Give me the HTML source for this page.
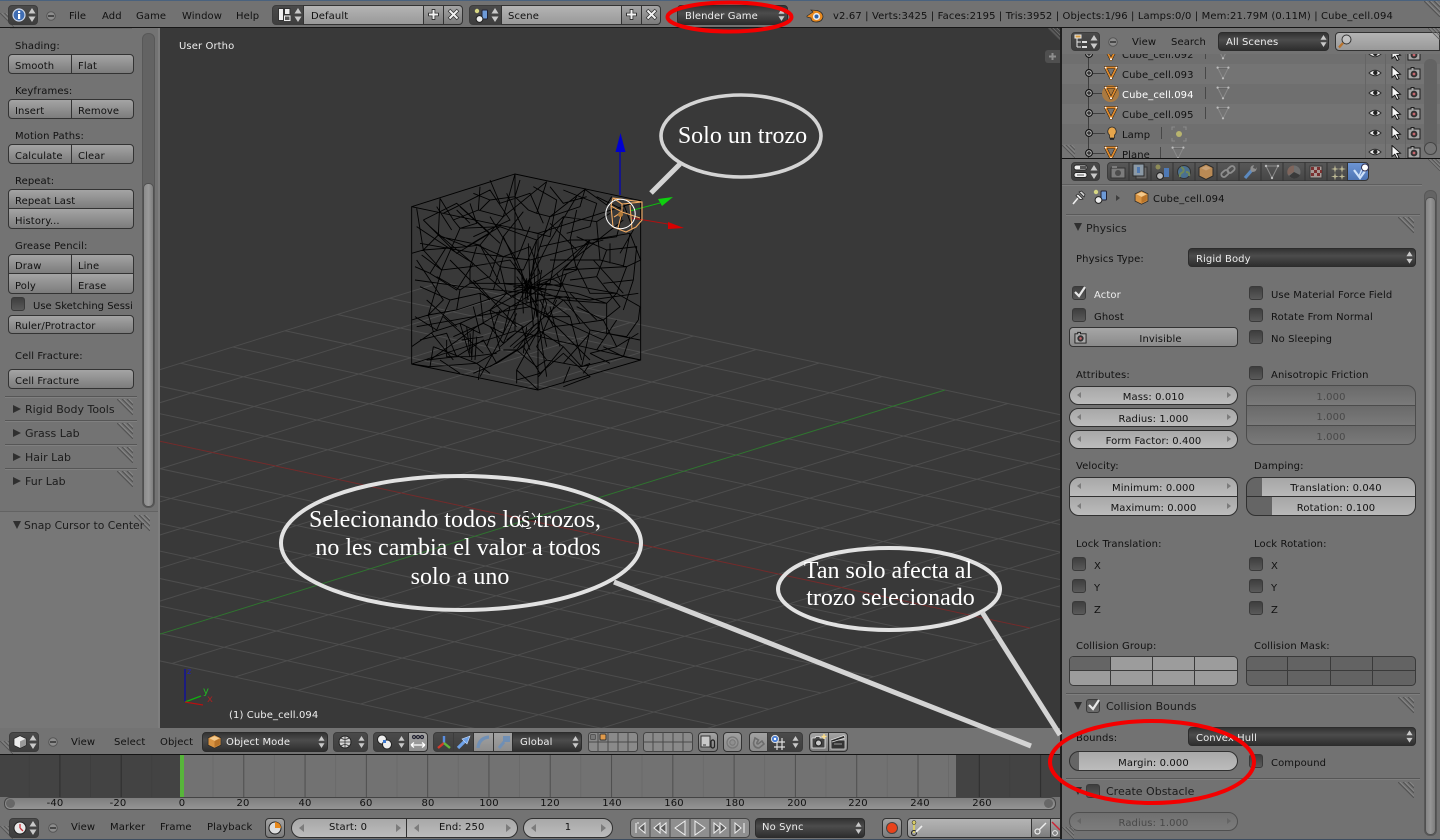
<!DOCTYPE html>
<html lang="en"><head><meta charset="utf-8"><title>Blender</title>
<style>
html,body{margin:0;padding:0;background:#727272;overflow:hidden}
#r{position:relative;width:1440px;height:840px;overflow:hidden;background:#727272;font:10px/14px "DejaVu Sans","Liberation Sans",sans-serif;color:#111}
#r div,#r span,#r svg.i{position:absolute}
.t{white-space:nowrap;height:14px;margin-top:2px;letter-spacing:.1px}
.w{color:#eee}
.g{color:#484848}
.h{font-size:11px;color:#1c1c1c;margin-top:1px;letter-spacing:0}
.cn{text-align:center}
.b{box-sizing:border-box;border:1px solid #333;background:linear-gradient(#a4a4a4,#7c7c7c)}
.f{box-sizing:border-box;border:1px solid #333;background:linear-gradient(#b4b4b4,#999)}
.d{box-sizing:border-box;border:1px solid #2c2c2c;border-radius:4px;background:linear-gradient(#333,#4c4c4c 40%,#2e2e2e)}
.k{box-sizing:border-box;border:1px solid #3c3c3c;background:linear-gradient(#4a4a4a,#3e3e3e)}
.n{box-sizing:border-box;border:1px solid #303030;background:linear-gradient(#a8a8a8,#bcbcbc)}
.c{box-sizing:border-box;width:14px;height:14px;border:1px solid #3a3a3a;border-radius:3px;background:linear-gradient(#3e3e3e,#5a5a5a)}
.s{background:#565656;height:1px;box-shadow:0 1px 0 #808080}
.i{overflow:visible}
</style></head><body><div id="r">

<svg width="0" height="0" style="position:absolute"><defs>
<symbol id="ud" viewBox="0 0 8 14"><path d="M4 0L7.5 5.5H.5zM4 14L.5 8.5h7z" fill="#c9c9c9"/></symbol>
<symbol id="mn" viewBox="0 0 12 12"><circle cx="6" cy="6" r="4.3" fill="#8d8d8d" stroke="#565656"/><rect x="3" y="5.2" width="6" height="1.6" fill="#363636"/></symbol>
<symbol id="ha" viewBox="0 0 16 16"><path d="M0 0L16 16M5 0L16 11M10 0L16 6" stroke="#525252" fill="none"/><path d="M1 -1L17 15M6 -1L17 10M11 -1L17 5" stroke="#8c8c8c" fill="none" stroke-width=".7"/></symbol>
<symbol id="eye" viewBox="0 0 14 14"><path d="M1 7Q7 1.5 13 7Q7 12.5 1 7z" fill="#ececec" stroke="#2a2a2a"/><circle cx="7.3" cy="6.8" r="2.2" fill="#222"/></symbol>
<symbol id="cur" viewBox="0 0 14 14"><path d="M3 .5V11.5L5.8 9.2L8 13.5L10 12.5L7.8 8.4L11.5 8.2Z" fill="#f6f6f6" stroke="#111" stroke-width=".9"/></symbol>
<symbol id="cam" viewBox="0 0 14 14"><path d="M1 3H4V1.5H7V3H13V13H1Z" fill="#a8a8a8" stroke="#1e1e1e"/><circle cx="7" cy="8" r="3.4" fill="#333"/><circle cx="7" cy="8" r="1.4" fill="#c7656c"/></symbol>
<symbol id="tri" viewBox="0 0 14 14"><path d="M1.5 1.5H12.5L7 12.5Z" fill="none" stroke="#1f1a14" stroke-width="2.8"/><path d="M1.5 1.5H12.5L7 12.5Z" fill="none" stroke="#e08a2c" stroke-width="1.8"/><circle cx="7" cy="12.3" r="1" fill="#fff"/><circle cx="1.6" cy="1.6" r=".9" fill="#fff"/><circle cx="12.4" cy="1.6" r=".9" fill="#fff"/></symbol>
<symbol id="gt" viewBox="0 0 14 14"><path d="M1.5 1.5H12.5L7 12.5Z" fill="none" stroke="#8a8a8a" stroke-width="1"/><path d="M2.7 2.7H11.2" stroke="#5a5a5a" stroke-width=".5"/><circle cx="7" cy="12.3" r="1.1" fill="#bdbdbd"/><circle cx="1.6" cy="1.6" r="1.1" fill="#bdbdbd"/><circle cx="12.4" cy="1.6" r="1.1" fill="#bdbdbd"/></symbol>
<symbol id="cube" viewBox="0 0 14 14"><path d="M7 .7L13 3.6V10.4L7 13.3L1 10.4V3.6Z" fill="#d99442" stroke="#2b2b2b" stroke-width=".7"/><path d="M7 2L11.7 4L7 6.4L2.3 4Z" fill="#f3c98d"/><path d="M7 6.6V12.3L12 9.8V4.2Z" fill="#b97429"/></symbol>
<symbol id="ex" viewBox="0 0 10 10"><circle cx="5" cy="5" r="3.4" fill="#a9a9a9" stroke="#111" stroke-width="1.1"/><path d="M3 5H7M5 3V7" stroke="#111" stroke-width="1"/></symbol>
<symbol id="sc" viewBox="0 0 16 16"><rect x="8" y="2" width="5.5" height="9" rx="1" fill="#6d9ad8" stroke="#223"/><circle cx="5.5" cy="11" r="3.4" fill="#ededed" stroke="#222"/><circle cx="3" cy="3" r="2.2" fill="#d7d783"/></symbol>
</defs></svg>

<!-- top strip + bar -->
<div style="left:0;top:0;width:1440px;height:1px;background:#4a627e"></div>
<div style="left:0;top:27px;width:1440px;height:1px;background:#161616"></div>
<svg class="i" style="left:0;top:13px" width="14" height="14"><use href="#ha"/></svg>
<svg class="i" style="left:1424px;top:1px" width="16" height="16"><use href="#ha"/></svg>

<div class="k" style="left:8px;top:5px;width:30px;height:20px;border-radius:4px"></div>
<svg class="i" style="left:12px;top:8px" width="14" height="14"><circle cx="7" cy="7" r="6" fill="#3f6db4" stroke="#cfd9ea" stroke-width="1.2"/><rect x="6" y="6" width="2.2" height="5" fill="#fff"/><rect x="6" y="3" width="2.2" height="2" fill="#fff"/></svg>
<svg class="i" style="left:28px;top:8px" width="8" height="14"><use href="#ud"/></svg>
<svg class="i" style="left:45px;top:10px" width="12" height="12"><use href="#mn"/></svg>
<span class="t" style="left:69px;top:8px">File</span>
<span class="t" style="left:102px;top:8px">Add</span>
<span class="t" style="left:136px;top:8px">Game</span>
<span class="t" style="left:182px;top:8px">Window</span>
<span class="t" style="left:236px;top:8px">Help</span>

<div class="k" style="left:272px;top:5px;width:32px;height:20px;border-radius:4px 0 0 4px"></div>
<svg class="i" style="left:278px;top:8px" width="13" height="13"><rect x=".5" y=".5" width="5" height="12" fill="#eee" stroke="#333"/><rect x="6.5" y=".5" width="5.5" height="6" fill="#eee" stroke="#333"/><rect x="6.5" y="8" width="5.5" height="4.5" fill="#555" stroke="#eee"/></svg>
<svg class="i" style="left:294px;top:8px" width="8" height="14"><use href="#ud"/></svg>
<div class="f" style="left:303px;top:5px;width:121px;height:20px"></div>
<span class="t" style="left:311px;top:8px">Default</span>
<div class="b" style="left:423px;top:5px;width:21px;height:20px"></div>
<div class="b" style="left:443px;top:5px;width:20px;height:20px;border-radius:0 4px 4px 0"></div>
<svg class="i" style="left:428px;top:9px" width="11" height="11"><path d="M5.5 0V11M0 5.5H11" stroke="#333" stroke-width="3.6"/><path d="M5.5 1V10M1 5.5H10" stroke="#f2f2f2" stroke-width="2"/></svg>
<svg class="i" style="left:448px;top:9px" width="11" height="11"><path d="M1 1L10 10M10 1L1 10" stroke="#333" stroke-width="3.6"/><path d="M1.5 1.5L9.5 9.5M9.5 1.5L1.5 9.5" stroke="#f2f2f2" stroke-width="2"/></svg>

<div class="k" style="left:469px;top:5px;width:33px;height:20px;border-radius:4px 0 0 4px"></div>
<svg class="i" style="left:474px;top:8px" width="16" height="16"><use href="#sc"/></svg>
<svg class="i" style="left:491px;top:8px" width="8" height="14"><use href="#ud"/></svg>
<div class="f" style="left:501px;top:5px;width:121px;height:20px"></div>
<span class="t" style="left:508px;top:8px">Scene</span>
<div class="b" style="left:621px;top:5px;width:21px;height:20px"></div>
<div class="b" style="left:641px;top:5px;width:20px;height:20px;border-radius:0 4px 4px 0"></div>
<svg class="i" style="left:626px;top:9px" width="11" height="11"><path d="M5.5 0V11M0 5.5H11" stroke="#333" stroke-width="3.6"/><path d="M5.5 1V10M1 5.5H10" stroke="#f2f2f2" stroke-width="2"/></svg>
<svg class="i" style="left:646px;top:9px" width="11" height="11"><path d="M1 1L10 10M10 1L1 10" stroke="#333" stroke-width="3.6"/><path d="M1.5 1.5L9.5 9.5M9.5 1.5L1.5 9.5" stroke="#f2f2f2" stroke-width="2"/></svg>

<div class="d" style="left:677px;top:5px;width:111px;height:20px"></div>
<span class="t w" style="left:685px;top:8px">Blender Game</span>
<svg class="i" style="left:778px;top:9px" width="7" height="12"><use href="#ud"/></svg>
<svg class="i" style="left:806px;top:8px" width="18" height="15" viewBox="0 0 18 15"><path d="M1 8L7 4L5 2L11 2.5Q17 4 17 9Q16 14 10 14Q5 14 5 10L1 9Z" fill="#e98a1f" stroke="#2a2a2a" stroke-width=".7"/><circle cx="10.5" cy="8.5" r="3.6" fill="#eee"/><circle cx="10.5" cy="8.5" r="2" fill="#2d62a8"/></svg>
<span class="t" style="left:833px;top:8px;width:560px;letter-spacing:.13px">v2.67 | Verts:3425 | Faces:2195 | Tris:3952 | Objects:1/96 | Lamps:0/0 | Mem:21.79M (0.11M) | Cube_cell.094</span>

<!-- Viewport -->
<div style="left:160px;top:28px;width:900px;height:700px;background:#393939"></div>
<svg class="i" style="left:160px;top:28px;overflow:hidden" width="900" height="700" viewBox="160 28 900 700">
<g transform="matrix(62.9 13.5 52.25 -16.25 527 520)" fill="none" stroke="#4d4d4d"><path vector-effect="non-scaling-stroke" d="M-8 -8H8M-8 -7H8M-8 -6H8M-8 -5H8M-8 -4H8M-8 -3H8M-8 -2H8M-8 -1H8M-8 1H8M-8 2H8M-8 3H8M-8 4H8M-8 5H8M-8 6H8M-8 7H8M-8 8H8M-8 -8V8M-7 -8V8M-6 -8V8M-5 -8V8M-4 -8V8M-3 -8V8M-2 -8V8M-1 -8V8M1 -8V8M2 -8V8M3 -8V8M4 -8V8M5 -8V8M6 -8V8M7 -8V8M8 -8V8"/></g>
<path d="M24 412L1030 628" stroke="#742b2b" fill="none"/>
<path d="M109 650L945 390" stroke="#2f752f" fill="none"/>
<g transform="translate(390 160) scale(.33333)" fill="none" stroke="#000" stroke-width="2.7">
<path d="M65 140L375 42L752 122V600L444 690L65 612ZM65 140V612M65 612L444 690"/>
<path d="M150 115L145 225L230 260L270 255L340 170L375 42M270 80L265 150L340 170L470 65M470 65L440 160L480 170L585 88L570 140L480 170M585 88L650 135L665 110M150 115L190 180L265 150M80 145L100 270L145 225M65 280L100 270L155 330L95 285M100 270L230 260L330 200L440 240L520 170L620 185L660 160M190 180L210 205L330 200M210 205L155 330L240 320L260 260M240 320L240 370L330 370L420 380M330 370L270 255M340 230L410 380L470 200L480 170M415 250L420 380L440 240M520 170L480 370L420 380M520 330L600 240L720 220L752 300M620 185L630 300L710 320L752 300M480 300L630 300M520 330L710 320L680 400L750 440M650 430L680 400L510 370M650 430L650 520L750 540M745 480L750 440M745 480L710 530L650 520M520 420L650 430M520 420L600 510L650 520M600 510L575 620M420 380L430 500L380 570L340 570M430 500L520 420L420 380M470 370L445 510L520 560L575 620L600 610M445 510L380 630L445 690M520 560L445 650M350 400L300 450L330 570L260 610L130 560M350 400L200 450L115 465L65 480M155 330L115 465L130 515L65 560M130 515L210 490L300 450M210 490L240 590L320 580M240 520L245 590M260 530L255 600M130 560L120 620M170 540L170 590L240 590M300 450L400 500L330 560M300 450L420 380M420 380L360 300L240 320M420 380L530 300L600 240M420 380L540 470L575 600M420 380L560 400L650 430M415 360L410 430M425 365L420 440M405 370L415 420M410 355L405 425M440 370L470 430L460 470M470 370L510 380L520 330M440 370Q490 340 515 380M340 370L520 375M350 540L430 480M360 560L440 490M370 565L445 500M385 570L450 510M300 620L380 570L440 620L470 600L575 620L700 590L752 600M700 590L720 530M125 520L190 600M65 612L120 620L260 610L300 640M580 640L600 610M270 620L265 660M380 630L380 670M150 230L270 255L330 320L400 330M480 80L520 130L590 110M250 100L300 120L270 150M300 120L375 110L390 60M375 110L415 150L440 160M400 155L340 230M340 230L300 350L240 370M600 240L560 320L520 330M560 320L600 400L680 400M140 350L210 390L240 370M210 390L200 450M80 300L160 420L115 465M330 320L350 400L470 370M400 330L440 240M460 470L540 470M500 420L440 560L470 600M380 460L340 550L300 500M240 130L260 190L210 205M560 150L540 240L600 240M660 250L660 310M700 320L720 220M250 440L270 520L210 490M150 600L210 640M540 620L520 670M640 560L700 590"/>
<path d="M65 140L444 220L752 122M444 220V690M375 42V513M65 612L375 513L752 600M100 180L200 130L300 220L200 280L100 180M160 160L300 90L360 180L250 230M300 60L330 130L420 100L460 190M430 80L500 120L480 230L400 210M520 90L620 130L600 200L530 220M620 110L700 150L680 230L610 240M700 130L730 210L690 280M80 200L170 260L120 340L75 320M170 260L250 310L200 390L120 340M250 250L340 290L310 390M340 290L420 260L450 340L370 390M450 260L540 240L560 330L480 360M560 230L650 270L620 350L540 360M650 270L740 260L730 360L640 370M620 350L690 440L640 480L560 440M730 360L700 450M90 380L180 420L140 510L75 470M180 420L270 400L280 490L190 530M270 400L360 440L340 520L280 490M360 440L450 420L490 500L400 540M450 420L530 410L570 490L490 500M570 490L640 480L680 560L600 580M680 560L745 520M90 540L170 520L200 590L110 600M200 590L280 540L320 610L250 640M320 610L400 560L450 640L380 660M450 640L520 580L600 650L520 680M600 580L660 610M395 330L400 460M430 300L440 470M455 330L430 480M380 350L445 440M370 380L470 390M360 410L480 360M395 500L420 570M410 500L400 580M450 470L470 560M230 500L240 580M250 510L245 600M215 540L280 530M140 140L185 210M200 150L240 190M500 340L540 420M530 340L490 430"/>
<path d="M120 200L260 320L350 400L470 470L600 600M300 170L380 300L440 450L470 650M560 110L470 260L400 400L320 560L270 650M700 180L560 290L430 400L260 500L120 600M75 360L220 380L420 400L600 420L745 400M90 250L260 280L420 300L640 240M80 500L250 470L420 440L640 540M180 300L300 420M250 360L380 500M160 470L280 580M480 190L560 270M540 400L620 480M610 300L700 400M350 100L400 210M210 140L330 250M600 520L520 610M680 480L620 570M110 420L200 500M330 450L290 560M480 440L510 560M420 200L380 300"/>
</g>
<path d="M620 195V150" stroke="#0000c0" stroke-width="1.2"/>
<path d="M620.5 133L625.5 152H615.5Z" fill="#0000d0"/>
<path d="M630 211L660 203" stroke="#10b810" stroke-width="1"/>
<path d="M658 199L673 197L662 206Z" fill="#0fd00f"/>
<path d="M632 218L668 224" stroke="#b01010" stroke-width="1"/>
<path d="M668 222L684 228L668 229Z" fill="#d80000"/>
<g fill="none" stroke="#f0aa62" stroke-width="1.1"><path d="M613 198L642 202V220L636 227L626 232L613 227L611 206Z"/><path d="M613 198L622 204L642 202M611 206L622 212L622 204M622 212L618 228M622 212L640 218M614 217L622 212M630 205L632 229"/></g>
<circle cx="620.5" cy="214" r="14.7" fill="none" stroke="#fff" stroke-width="1"/>
<circle cx="620.5" cy="214.3" r="2.6" fill="#b07a3a"/>
<path d="M185 669V702" stroke="#0000c8" stroke-width="1"/>
<path d="M185 702L201 696" stroke="#10b010" stroke-width="1.3"/>
<path d="M185 702L203 705" stroke="#b81010" stroke-width="1.3"/>
<path d="M527 510V530M517 520H537" stroke="#111" stroke-width="1"/>
<circle cx="527" cy="520" r="8.5" fill="none" stroke="#fff" stroke-dasharray="5 4" stroke-width="1"/>
</svg>
<span class="t w" style="left:179px;top:38px">User Ortho</span>
<span class="t" style="left:187px;top:663px;color:#1e1ec8;font-size:8px">z</span>
<span class="t" style="left:203px;top:683px;color:#22b922">y</span>
<span class="t" style="left:207px;top:691px;color:#a52222">x</span>
<span class="t w" style="left:229px;top:707px">(1) Cube_cell.094</span>
<div style="left:1045px;top:50px;width:15px;height:13px;background:#4f4f4f;border-radius:3px 0 0 3px"></div>
<svg class="i" style="left:1049px;top:53px" width="7" height="7"><path d="M3.5 0V7M0 3.5H7" stroke="#8e8e8e" stroke-width="2"/></svg>
<svg class="i" style="left:1048px;top:28px" width="12" height="12"><use href="#ha"/></svg>

<!-- Tool shelf -->
<div style="left:0;top:28px;width:160px;height:700px;background:#737373"></div>
<div style="left:158px;top:28px;width:2px;height:700px;background:#7e7e7e"></div>
<div style="left:0;top:512px;width:158px;height:216px;background:#777"></div>
<div style="left:0;top:511px;width:158px;height:1px;background:#636363"></div>
<div style="left:10px;top:28px;width:122px;height:1px;background:#666"></div>
<div style="left:142px;top:33px;width:13px;height:475px;background:#636363;border-radius:6px;box-sizing:border-box;border:1px solid #585858"></div>
<div style="left:143px;top:183px;width:11px;height:324px;background:linear-gradient(90deg,#8a8a8a,#9a9a9a,#7e7e7e);border-radius:5px;box-sizing:border-box;border:1px solid #505050"></div>

<span class="t" style="left:15px;top:38px">Shading:</span>
<div class="b" style="left:8px;top:54px;width:64px;height:20px;border-radius:4px 0 0 4px"></div><div class="b" style="left:71px;top:54px;width:63px;height:20px;border-radius:0 4px 4px 0"></div>
<span class="t" style="left:15px;top:58px">Smooth</span><span class="t" style="left:78px;top:58px">Flat</span>
<span class="t" style="left:15px;top:83px">Keyframes:</span>
<div class="b" style="left:8px;top:99px;width:64px;height:20px;border-radius:4px 0 0 4px"></div><div class="b" style="left:71px;top:99px;width:63px;height:20px;border-radius:0 4px 4px 0"></div>
<span class="t" style="left:15px;top:103px">Insert</span><span class="t" style="left:78px;top:103px">Remove</span>
<span class="t" style="left:15px;top:128px">Motion Paths:</span>
<div class="b" style="left:8px;top:144px;width:64px;height:20px;border-radius:4px 0 0 4px"></div><div class="b" style="left:71px;top:144px;width:63px;height:20px;border-radius:0 4px 4px 0"></div>
<span class="t" style="left:15px;top:148px">Calculate</span><span class="t" style="left:78px;top:148px">Clear</span>
<span class="t" style="left:15px;top:173px">Repeat:</span>
<div class="b" style="left:8px;top:189px;width:126px;height:20px;border-radius:4px 4px 0 0"></div><div class="b" style="left:8px;top:208px;width:126px;height:21px;border-radius:0 0 4px 4px"></div>
<span class="t" style="left:15px;top:193px">Repeat Last</span><span class="t" style="left:15px;top:213px">History...</span>
<span class="t" style="left:15px;top:238px">Grease Pencil:</span>
<div class="b" style="left:8px;top:254px;width:64px;height:20px;border-radius:4px 0 0 0"></div><div class="b" style="left:71px;top:254px;width:63px;height:20px;border-radius:0 4px 0 0"></div>
<div class="b" style="left:8px;top:273px;width:64px;height:21px;border-radius:0 0 0 4px"></div><div class="b" style="left:71px;top:273px;width:63px;height:21px;border-radius:0 0 4px 0"></div>
<span class="t" style="left:15px;top:258px">Draw</span><span class="t" style="left:78px;top:258px">Line</span>
<span class="t" style="left:15px;top:278px">Poly</span><span class="t" style="left:78px;top:278px">Erase</span>
<div class="c" style="left:11px;top:297px"></div>
<span class="t" style="left:33px;top:298px;letter-spacing:0">Use Sketching Sessi</span>
<div class="b" style="left:8px;top:315px;width:126px;height:19px;border-radius:4px"></div>
<span class="t" style="left:15px;top:318px">Ruler/Protractor</span>
<span class="t" style="left:15px;top:348px">Cell Fracture:</span>
<div class="b" style="left:8px;top:369px;width:126px;height:20px;border-radius:4px"></div>
<span class="t" style="left:15px;top:373px">Cell Fracture</span>

<div class="s" style="left:5px;top:396px;width:132px"></div>
<div class="s" style="left:5px;top:420px;width:132px"></div>
<div class="s" style="left:5px;top:444px;width:132px"></div>
<div class="s" style="left:5px;top:468px;width:132px"></div>
<svg class="i" style="left:12px;top:404px" width="10" height="10"><path d="M1 1L9 5L1 9Z" fill="#2f2f2f"/></svg><span class="t h" style="left:25px;top:402px">Rigid Body Tools</span><svg class="i" style="left:117px;top:399px" width="16" height="16"><use href="#ha"/></svg>
<svg class="i" style="left:12px;top:428px" width="10" height="10"><path d="M1 1L9 5L1 9Z" fill="#2f2f2f"/></svg><span class="t h" style="left:25px;top:426px">Grass Lab</span><svg class="i" style="left:117px;top:423px" width="16" height="16"><use href="#ha"/></svg>
<svg class="i" style="left:12px;top:452px" width="10" height="10"><path d="M1 1L9 5L1 9Z" fill="#2f2f2f"/></svg><span class="t h" style="left:25px;top:450px">Hair Lab</span><svg class="i" style="left:117px;top:447px" width="16" height="16"><use href="#ha"/></svg>
<svg class="i" style="left:12px;top:476px" width="10" height="10"><path d="M1 1L9 5L1 9Z" fill="#2f2f2f"/></svg><span class="t h" style="left:25px;top:474px">Fur Lab</span><svg class="i" style="left:117px;top:471px" width="16" height="16"><use href="#ha"/></svg>
<svg class="i" style="left:12px;top:520px" width="10" height="10"><path d="M1 1H9L5 9Z" fill="#2f2f2f"/></svg><span class="t h" style="left:24px;top:518px;font-size:10.8px">Snap Cursor to Center</span><svg class="i" style="left:134px;top:515px" width="16" height="16"><use href="#ha"/></svg>

<!-- 3D view header -->
<div style="left:0;top:728px;width:1061px;height:27px;background:#737373"></div>
<div style="left:0;top:754px;width:1061px;height:1px;background:#141414"></div>
<svg class="i" style="left:0;top:741px" width="13" height="13"><use href="#ha"/></svg>
<div class="k" style="left:9px;top:732px;width:30px;height:20px;border-radius:4px"></div>
<svg class="i" style="left:13px;top:735px" width="14" height="14"><path d="M7 .7L13 3.6V10.4L7 13.3L1 10.4V3.6Z" fill="#ececec" stroke="#222" stroke-width=".7"/><path d="M7 6.4V13L13 10V3.6Z" fill="#999"/></svg>
<svg class="i" style="left:29px;top:735px" width="8" height="14"><use href="#ud"/></svg>
<svg class="i" style="left:47px;top:736px" width="12" height="12"><use href="#mn"/></svg>
<span class="t" style="left:71px;top:734px">View</span>
<span class="t" style="left:114px;top:734px">Select</span>
<span class="t" style="left:160px;top:734px">Object</span>
<div class="d" style="left:202px;top:732px;width:126px;height:20px"></div>
<svg class="i" style="left:207px;top:734px" width="15" height="15"><use href="#cube"/></svg>
<span class="t w" style="left:226px;top:734px">Object Mode</span>
<svg class="i" style="left:318px;top:736px" width="7" height="12"><use href="#ud"/></svg>
<div class="k" style="left:333px;top:732px;width:35px;height:20px;border-radius:4px"></div>
<svg class="i" style="left:338px;top:735px" width="14" height="14"><circle cx="7" cy="7" r="6" fill="#d5d5d5" stroke="#222"/><path d="M1 7H13M7 1V13M3 3Q7 6 11 3M3 11Q7 8 11 11" stroke="#333" fill="none" stroke-width=".8"/></svg>
<svg class="i" style="left:358px;top:736px" width="7" height="12"><use href="#ud"/></svg>
<div class="k" style="left:373px;top:732px;width:36px;height:20px;border-radius:4px 0 0 4px"></div>
<svg class="i" style="left:376px;top:734px" width="18" height="16"><circle cx="6" cy="5.5" r="4.5" fill="#eee" stroke="#222"/><circle cx="11" cy="10.5" r="4.5" fill="#eee" stroke="#222"/><rect x="7" y="6" width="3" height="3" fill="#3b78d0"/></svg>
<svg class="i" style="left:398px;top:736px" width="7" height="12"><use href="#ud"/></svg>
<div class="b" style="left:408px;top:732px;width:20px;height:20px;border-radius:0 4px 4px 0;background:linear-gradient(#a6a6a6,#8e8e8e)"></div>
<svg class="i" style="left:410px;top:734px" width="16" height="16"><circle cx="4" cy="3" r="1.6" fill="#777" stroke="#223"/><circle cx="8" cy="3" r="1.6" fill="#777" stroke="#223"/><circle cx="12" cy="3" r="1.6" fill="#777" stroke="#223"/><path d="M1 11H15M1 11L4 8.5M1 11L4 13.5M15 11L12 8.5M15 11L12 13.5" stroke="#fff" fill="none" stroke-width="1.3"/></svg>
<div class="k" style="left:433px;top:732px;width:21px;height:20px;border-radius:4px 0 0 4px"></div>
<div class="k" style="left:453px;top:732px;width:21px;height:20px"></div>
<div class="b" style="left:473px;top:732px;width:21px;height:20px;background:linear-gradient(#a2a2a2,#8d8d8d)"></div>
<div class="b" style="left:493px;top:732px;width:20px;height:20px;background:linear-gradient(#a2a2a2,#8d8d8d)"></div>
<div class="d" style="left:512px;top:732px;width:70px;height:20px;border-radius:0 4px 4px 0"></div>
<svg class="i" style="left:436px;top:734px" width="16" height="16"><path d="M8 2V9" stroke="#5a8ee0" stroke-width="2.4"/><path d="M8 9L2 14" stroke="#d53a2a" stroke-width="2.4"/><path d="M8 9L14 14" stroke="#63b73b" stroke-width="2.4"/></svg>
<svg class="i" style="left:456px;top:734px" width="16" height="16"><path d="M2 14L9 7" stroke="#6fa2e8" stroke-width="3.2"/><path d="M14 2L6 5L11 10Z" fill="#6fa2e8" stroke="#cfe0f7" stroke-width=".6"/></svg>
<svg class="i" style="left:476px;top:734px" width="16" height="16"><path d="M2 14Q3 4 13 3" stroke="#6f8fb5" stroke-width="3.2" fill="none"/></svg>
<svg class="i" style="left:496px;top:734px" width="16" height="16"><path d="M3 14L8 8" stroke="#6f8fb5" stroke-width="3"/><rect x="7" y="2" width="7" height="6" fill="#6f8fb5"/></svg>
<span class="t w" style="left:520px;top:734px">Global</span>
<svg class="i" style="left:572px;top:736px" width="7" height="12"><use href="#ud"/></svg>
<svg class="i" style="left:588px;top:732px" width="50" height="20"><rect x=".5" y=".5" width="49" height="19" rx="3" fill="#8a8a8a" stroke="#444"/><path d="M10 .5V19.5M20 .5V19.5M30 .5V19.5M40 .5V19.5M.5 10H49.5" stroke="#4a4a4a"/><rect x="2.5" y="2.5" width="5" height="5" rx="1" fill="#777" stroke="#555"/><rect x="12" y="2" width="6" height="6" rx="1" fill="#e09a4a" stroke="#333"/></svg>
<svg class="i" style="left:643px;top:732px" width="50" height="20"><rect x=".5" y=".5" width="49" height="19" rx="3" fill="#8a8a8a" stroke="#444"/><path d="M10 .5V19.5M20 .5V19.5M30 .5V19.5M40 .5V19.5M.5 10H49.5" stroke="#4a4a4a"/></svg>
<div class="b" style="left:698px;top:732px;width:20px;height:20px;border-radius:4px"></div>
<svg class="i" style="left:700px;top:734px" width="16" height="16"><rect x="1" y="2" width="9" height="11" fill="#c9c9c9" stroke="#333"/><path d="M3 11H6" stroke="#333"/><rect x="11" y="6" width="3.5" height="8" rx="1.7" fill="none" stroke="#222" stroke-width="1.2"/></svg>
<div class="b" style="left:723px;top:732px;width:19px;height:20px;border-radius:4px;background:linear-gradient(#a0a0a0,#8a8a8a)"></div>
<svg class="i" style="left:725px;top:735px" width="15" height="15"><circle cx="7.5" cy="7.5" r="5.5" fill="none" stroke="#777" stroke-width="1.3"/><circle cx="7.5" cy="7.5" r="2.7" fill="#8f8f8f" stroke="#777"/></svg>
<div class="b" style="left:749px;top:732px;width:19px;height:20px;border-radius:4px 0 0 4px;background:linear-gradient(#a2a2a2,#8c8c8c)"></div>
<svg class="i" style="left:751px;top:735px" width="15" height="15"><path d="M4 3L2.5 8Q3 13 8 13L13 9L11 6L7 9Q5.5 9 6 7.5L7.5 5Z" fill="none" stroke="#6d6d6d" stroke-width="1.6"/></svg>
<div class="k" style="left:767px;top:732px;width:36px;height:20px;border-radius:0 4px 4px 0"></div>
<svg class="i" style="left:770px;top:734px" width="16" height="16"><path d="M4 8H15M4 13H15M7 4V16M12 4V16" stroke="#ddd" stroke-width="1.2"/><circle cx="5" cy="5" r="3.6" fill="#4a7fd6" stroke="#ddd"/><circle cx="5" cy="5" r="1.2" fill="#fff"/></svg>
<svg class="i" style="left:792px;top:736px" width="7" height="12"><use href="#ud"/></svg>
<div class="b" style="left:809px;top:732px;width:20px;height:20px;border-radius:4px 0 0 4px"></div>
<div class="b" style="left:828px;top:732px;width:20px;height:20px;border-radius:0 4px 4px 0"></div>
<svg class="i" style="left:811px;top:734px" width="16" height="16"><path d="M1 4H4L5 2.5H9V4H14V14H1Z" fill="#444" stroke="#eee" stroke-width=".8"/><circle cx="7.5" cy="9" r="3" fill="#c8c8c8" stroke="#222"/><path d="M13 0V5M10.5 2.5H15.5" stroke="#ffe08a" stroke-width="1.4"/></svg>
<svg class="i" style="left:830px;top:734px" width="16" height="16"><rect x="1" y="6" width="14" height="9" fill="#333" stroke="#ddd" stroke-width=".7"/><path d="M1 6L14 1.5L15 4L2 8" fill="#2b2b2b" stroke="#ddd" stroke-width=".7"/><path d="M4 10H12" stroke="#999"/></svg>

<!-- Timeline -->
<div style="left:0;top:755px;width:1061px;height:42px;background:#727272"></div>
<div style="left:0;top:755px;width:181px;height:42px;background:#434343"></div>
<div style="left:956px;top:755px;width:105px;height:42px;background:#434343"></div>
<div style="left:0;top:755px;width:1061px;height:42px;background-image:linear-gradient(90deg,rgba(0,0,0,.26) 1px,transparent 1px),linear-gradient(90deg,rgba(0,0,0,.07) 1px,transparent 1px);background-size:61.3px 100%,30.65px 100%;background-position:59.4px 0,28.75px 0"></div>
<div style="left:180px;top:755px;width:4px;height:42px;background:#57b53a"></div>
<div style="left:0;top:797px;width:1061px;height:15px;background:#737373"></div>
<div style="left:4px;top:797px;width:1052px;height:13px;box-sizing:border-box;border:1px solid #444;border-radius:6px;background:linear-gradient(#7e7e7e,#949494)"></div>
<div style="left:6px;top:799px;width:9px;height:9px;background:#676767;border-radius:50%"></div>
<div style="left:1044px;top:799px;width:9px;height:9px;background:#676767;border-radius:50%"></div>
<span class="t cn" style="left:35px;top:795px;width:40px">-40</span>
<span class="t cn" style="left:98px;top:795px;width:40px">-20</span>
<span class="t cn" style="left:162px;top:795px;width:40px">0</span>
<span class="t cn" style="left:223px;top:795px;width:40px">20</span>
<span class="t cn" style="left:285px;top:795px;width:40px">40</span>
<span class="t cn" style="left:346px;top:795px;width:40px">60</span>
<span class="t cn" style="left:408px;top:795px;width:40px">80</span>
<span class="t cn" style="left:469px;top:795px;width:40px">100</span>
<span class="t cn" style="left:530px;top:795px;width:40px">120</span>
<span class="t cn" style="left:592px;top:795px;width:40px">140</span>
<span class="t cn" style="left:654px;top:795px;width:40px">160</span>
<span class="t cn" style="left:715px;top:795px;width:40px">180</span>
<span class="t cn" style="left:777px;top:795px;width:40px">200</span>
<span class="t cn" style="left:838px;top:795px;width:40px">220</span>
<span class="t cn" style="left:900px;top:795px;width:40px">240</span>
<span class="t cn" style="left:962px;top:795px;width:40px">260</span>

<!-- Timeline header -->
<div style="left:0;top:812px;width:1061px;height:28px;background:#737373"></div>
<svg class="i" style="left:0;top:826px" width="13" height="13"><use href="#ha"/></svg>
<div class="k" style="left:9px;top:818px;width:30px;height:20px;border-radius:4px"></div>
<svg class="i" style="left:13px;top:821px" width="14" height="14"><circle cx="7" cy="7" r="6" fill="#e8e8e8" stroke="#222"/><path d="M7 7V3M7 7L10 10" stroke="#c8343a" stroke-width="1.3"/></svg>
<svg class="i" style="left:29px;top:821px" width="8" height="14"><use href="#ud"/></svg>
<svg class="i" style="left:47px;top:822px" width="12" height="12"><use href="#mn"/></svg>
<span class="t" style="left:71px;top:819px">View</span>
<span class="t" style="left:110px;top:819px">Marker</span>
<span class="t" style="left:160px;top:819px">Frame</span>
<span class="t" style="left:207px;top:819px">Playback</span>
<div class="b" style="left:265px;top:818px;width:20px;height:20px;border-radius:4px"></div>
<svg class="i" style="left:268px;top:821px" width="14" height="14"><circle cx="7" cy="7" r="6" fill="#ddd" stroke="#222"/><path d="M7 7V1A6 6 0 0 1 13 7Z" fill="#e8881a"/></svg>
<div class="n" style="left:291px;top:818px;width:116px;height:20px;border-radius:10px 0 0 10px"></div>
<div class="n" style="left:406px;top:818px;width:112px;height:20px;border-radius:0 10px 10px 0"></div>
<div class="n" style="left:523px;top:818px;width:90px;height:20px;border-radius:10px"></div>
<svg class="i" style="left:298px;top:823px" width="8" height="10"><path d="M6 1L1 5L6 9Z" fill="#7c7c7c"/></svg>
<svg class="i" style="left:395px;top:823px" width="8" height="10"><path d="M1 1L6 5L1 9Z" fill="#7c7c7c"/></svg>
<svg class="i" style="left:413px;top:823px" width="8" height="10"><path d="M6 1L1 5L6 9Z" fill="#7c7c7c"/></svg>
<svg class="i" style="left:505px;top:823px" width="8" height="10"><path d="M1 1L6 5L1 9Z" fill="#7c7c7c"/></svg>
<svg class="i" style="left:530px;top:823px" width="8" height="10"><path d="M6 1L1 5L6 9Z" fill="#7c7c7c"/></svg>
<svg class="i" style="left:600px;top:823px" width="8" height="10"><path d="M1 1L6 5L1 9Z" fill="#7c7c7c"/></svg>
<span class="t" style="left:329px;top:819px">Start: 0</span>
<span class="t" style="left:439px;top:819px">End: 250</span>
<span class="t cn" style="left:523px;top:819px;width:90px">1</span>
<svg class="i" style="left:630px;top:818px" width="120" height="20" viewBox="0 0 120 20"><rect x=".5" y=".5" width="119" height="19" rx="4" fill="#8f8f8f" stroke="#444"/><path d="M20 .5V19.5M40 .5V19.5M60 .5V19.5M80 .5V19.5M100 .5V19.5" stroke="#4a4a4a"/><g fill="#5a5a5a" stroke="#f0f0f0" stroke-width="1"><path d="M6 5V15M15 5L9 10L15 15ZM9 5L7 5"/><path d="M30 5L24 10L30 15ZM36 5L30 10L36 15Z"/><path d="M55 3L45 10L55 17Z" fill="#808080"/><path d="M65 3L75 10L65 17Z" fill="#808080"/><path d="M84 5L90 10L84 15ZM90 5L96 10L90 15Z"/><path d="M114 5V15M105 5L111 10L105 15Z"/></g></svg>
<div class="d" style="left:755px;top:818px;width:110px;height:20px"></div>
<span class="t w" style="left:762px;top:819px">No Sync</span>
<svg class="i" style="left:855px;top:822px" width="7" height="12"><use href="#ud"/></svg>
<div class="b" style="left:882px;top:818px;width:20px;height:20px;border-radius:4px"></div>
<div style="left:887px;top:823px;width:10px;height:10px;border-radius:50%;background:#e8421a;box-shadow:0 0 0 1px #444"></div>
<div class="f" style="left:907px;top:818px;width:125px;height:20px;border-radius:4px 0 0 4px"></div>
<svg class="i" style="left:909px;top:820px" width="18" height="17"><path d="M5 2V13" stroke="#d7cc6a" stroke-width="2"/><circle cx="5" cy="2.5" r="2" fill="#d7cc6a" stroke="#222" stroke-width=".5"/><circle cx="5" cy="13" r="2.5" fill="none" stroke="#222"/><path d="M7 12L13 6" stroke="#eee" stroke-width="1.6"/></svg>
<div class="b" style="left:1031px;top:818px;width:20px;height:20px"></div>
<svg class="i" style="left:1034px;top:821px" width="14" height="14"><circle cx="3.5" cy="10.5" r="2.5" fill="none" stroke="#eee" stroke-width="1.2"/><path d="M5.5 8.5L12 2" stroke="#eee" stroke-width="1.4"/></svg>
<div class="b" style="left:1050px;top:818px;width:11px;height:20px"></div>
<svg class="i" style="left:1051px;top:820px" width="10" height="16"><path d="M1 2L9 10" stroke="#c23" stroke-width="1.4"/><circle cx="4" cy="13" r="2.4" fill="none" stroke="#eee"/></svg>

<!-- Vertical divider -->
<div style="left:1060px;top:28px;width:2px;height:812px;background:#1f1f1f"></div>

<!-- Outliner header -->
<div style="left:1062px;top:28px;width:378px;height:26px;background:#737373"></div>
<div class="k" style="left:1071px;top:32px;width:29px;height:19px;border-radius:4px"></div>
<svg class="i" style="left:1074px;top:34px" width="15" height="15"><path d="M1 1H7V4H1ZM3 4V13M3 8H7M3 13H7" stroke="#e8e8e8" fill="none" stroke-width="1"/><path d="M8 8H13M8 13H13" stroke="#ddd" stroke-width="2"/><rect x="1.5" y="1.5" width="5" height="2" fill="#d79c3f"/></svg>
<svg class="i" style="left:1090px;top:35px" width="8" height="14"><use href="#ud"/></svg>
<svg class="i" style="left:1107px;top:36px" width="12" height="12"><use href="#mn"/></svg>
<span class="t" style="left:1132px;top:34px">View</span>
<span class="t" style="left:1171px;top:34px">Search</span>
<div class="d" style="left:1218px;top:32px;width:111px;height:19px"></div>
<span class="t w" style="left:1226px;top:34px">All Scenes</span>
<svg class="i" style="left:1320px;top:35px" width="7" height="12"><use href="#ud"/></svg>
<div class="f" style="left:1335px;top:32px;width:105px;height:19px;border-radius:4px 0 0 4px"></div>
<svg class="i" style="left:1337px;top:33px" width="16" height="16"><circle cx="9.5" cy="6.5" r="4.5" fill="#ddd" fill-opacity=".45" stroke="#333"/><path d="M6 10L2 14.5" stroke="#b8732e" stroke-width="2.4"/></svg>
<svg class="i" style="left:1428px;top:28px" width="12" height="12"><use href="#ha"/></svg>

<!-- Outliner list -->
<div style="left:0;top:0;width:1440px;height:840px;clip-path:inset(54px 0 682px 1062px)">
<div style="left:1062px;top:44px;width:378px;height:20px;background:#6f6f6f"></div>
<div style="left:1062px;top:64px;width:378px;height:20px;background:#747474"></div>
<div style="left:1062px;top:84px;width:378px;height:20px;background:#6f6f6f"></div>
<div style="left:1062px;top:104px;width:378px;height:20px;background:#747474"></div>
<div style="left:1062px;top:124px;width:378px;height:20px;background:#6f6f6f"></div>
<div style="left:1062px;top:144px;width:378px;height:20px;background:#747474"></div>
<div style="left:1088px;top:54px;width:1px;height:105px;background:#3f3f3f"></div>
<div style="left:1365px;top:54px;width:1px;height:105px;background:#656565"></div>
<div style="left:1385px;top:54px;width:1px;height:105px;background:#656565"></div>
<div style="left:1405px;top:54px;width:1px;height:105px;background:#656565"></div>
<div style="left:1093px;top:73px;width:12px;height:1px;background:#3f3f3f"></div>
<div style="left:1093px;top:93px;width:12px;height:1px;background:#3f3f3f"></div>
<div style="left:1093px;top:113px;width:12px;height:1px;background:#3f3f3f"></div>
<div style="left:1093px;top:133px;width:12px;height:1px;background:#3f3f3f"></div>
<div style="left:1093px;top:153px;width:12px;height:1px;background:#3f3f3f"></div>
<svg class="i" style="left:1084px;top:49px" width="10" height="10"><use href="#ex"/></svg>
<svg class="i" style="left:1084px;top:68px" width="10" height="10"><use href="#ex"/></svg>
<svg class="i" style="left:1084px;top:88px" width="10" height="10"><use href="#ex"/></svg>
<svg class="i" style="left:1084px;top:108px" width="10" height="10"><use href="#ex"/></svg>
<svg class="i" style="left:1084px;top:128px" width="10" height="10"><use href="#ex"/></svg>
<svg class="i" style="left:1084px;top:148px" width="10" height="10"><use href="#ex"/></svg>
<div style="left:1102px;top:85px;width:17px;height:17px;border-radius:50%;background:#ab7a40"></div>
<svg class="i" style="left:1104px;top:47px" width="14" height="14"><use href="#tri"/></svg>
<svg class="i" style="left:1104px;top:66px" width="14" height="14"><use href="#tri"/></svg>
<svg class="i" style="left:1104px;top:86px" width="14" height="14"><use href="#tri"/></svg>
<svg class="i" style="left:1104px;top:106px" width="14" height="14"><use href="#tri"/></svg>
<svg class="i" style="left:1104px;top:146px" width="14" height="14"><use href="#tri"/></svg>
<svg class="i" style="left:1105px;top:126px" width="14" height="15"><path d="M7 1A4.5 4.5 0 0 1 9.5 9V12H4.5V9A4.5 4.5 0 0 1 7 1Z" fill="#e7a64c" stroke="#2a2a2a" stroke-width=".8"/><path d="M5 13H9" stroke="#222" stroke-width="1.6"/></svg>
<span class="t" style="left:1122px;top:47px">Cube_cell.092</span>
<span class="t" style="left:1122px;top:67px">Cube_cell.093</span>
<span class="t" style="left:1122px;top:87px;color:#fff">Cube_cell.094</span>
<span class="t" style="left:1122px;top:107px">Cube_cell.095</span>
<span class="t" style="left:1122px;top:127px">Lamp</span>
<span class="t" style="left:1122px;top:147px">Plane</span>
<div style="left:1205px;top:67px;width:1px;height:12px;background:#474747"></div>
<div style="left:1205px;top:47px;width:1px;height:12px;background:#474747"></div>
<div style="left:1205px;top:87px;width:1px;height:12px;background:#474747"></div>
<div style="left:1205px;top:107px;width:1px;height:12px;background:#474747"></div>
<div style="left:1161px;top:127px;width:1px;height:12px;background:#474747"></div>
<div style="left:1160px;top:147px;width:1px;height:12px;background:#474747"></div>
<svg class="i" style="left:1216px;top:46px" width="14" height="14"><use href="#gt"/></svg>
<svg class="i" style="left:1216px;top:66px" width="14" height="14"><use href="#gt"/></svg>
<svg class="i" style="left:1216px;top:86px" width="14" height="14"><use href="#gt"/></svg>
<svg class="i" style="left:1216px;top:106px" width="14" height="14"><use href="#gt"/></svg>
<svg class="i" style="left:1171px;top:146px" width="14" height="14"><use href="#gt"/></svg>
<svg class="i" style="left:1171px;top:126px" width="16" height="16"><path d="M1 4V1H4M12 1H15V4M15 12V15H12M4 15H1V12" fill="none" stroke="#8a8a8a" stroke-width="1.1"/><circle cx="8" cy="8" r="3" fill="#b8b46e"/></svg>
<svg class="i" style="left:1368px;top:47px" width="14" height="14"><use href="#eye"/></svg><svg class="i" style="left:1389px;top:47px" width="14" height="14"><use href="#cur"/></svg><svg class="i" style="left:1407px;top:47px" width="14" height="14"><use href="#cam"/></svg>
<svg class="i" style="left:1368px;top:66px" width="14" height="14"><use href="#eye"/></svg><svg class="i" style="left:1389px;top:66px" width="14" height="14"><use href="#cur"/></svg><svg class="i" style="left:1407px;top:66px" width="14" height="14"><use href="#cam"/></svg>
<svg class="i" style="left:1368px;top:86px" width="14" height="14"><use href="#eye"/></svg><svg class="i" style="left:1389px;top:86px" width="14" height="14"><use href="#cur"/></svg><svg class="i" style="left:1407px;top:86px" width="14" height="14"><use href="#cam"/></svg>
<svg class="i" style="left:1368px;top:106px" width="14" height="14"><use href="#eye"/></svg><svg class="i" style="left:1389px;top:106px" width="14" height="14"><use href="#cur"/></svg><svg class="i" style="left:1407px;top:106px" width="14" height="14"><use href="#cam"/></svg>
<svg class="i" style="left:1368px;top:126px" width="14" height="14"><use href="#eye"/></svg><svg class="i" style="left:1389px;top:126px" width="14" height="14"><use href="#cur"/></svg><svg class="i" style="left:1407px;top:126px" width="14" height="14"><use href="#cam"/></svg>
<svg class="i" style="left:1368px;top:145px" width="14" height="14"><use href="#eye"/></svg><svg class="i" style="left:1389px;top:145px" width="14" height="14"><use href="#cur"/></svg><svg class="i" style="left:1407px;top:145px" width="14" height="14"><use href="#cam"/></svg>
<div style="left:1424px;top:59px;width:13px;height:96px;background:#636363;border-radius:6px"></div>
<div style="left:1424px;top:142px;width:13px;height:13px;background:#747474;border-radius:50%;box-sizing:border-box;border:1px solid #444"></div>
<svg class="i" style="left:1062px;top:145px" width="13" height="13"><use href="#ha"/></svg>
</div>
<div style="left:1062px;top:158px;width:378px;height:1px;background:#111"></div>

<!-- Properties -->
<div style="left:1062px;top:159px;width:378px;height:681px;background:#727272"></div>
<svg class="i" style="left:1428px;top:159px" width="12" height="12"><use href="#ha"/></svg>
<div class="k" style="left:1071px;top:162px;width:29px;height:19px;border-radius:4px"></div>
<svg class="i" style="left:1073px;top:164px" width="16" height="15"><rect x="1" y="1" width="13" height="5" rx="2.5" fill="#eee" stroke="#222"/><rect x="7" y="2" width="6" height="3" fill="#555"/><rect x="1" y="8.5" width="13" height="5" rx="2.5" fill="#eee" stroke="#222"/><path d="M4 11H11" stroke="#555"/></svg>
<svg class="i" style="left:1090px;top:165px" width="8" height="14"><use href="#ud"/></svg>
<!-- Tabs -->
<div class="k" style="left:1107px;top:162px;width:241px;height:19px;border-radius:4px 0 0 4px;background:linear-gradient(#575757,#474747)"></div>
<div style="left:1347px;top:162px;width:22px;height:19px;box-sizing:border-box;border:1px solid #333;border-radius:0 4px 4px 0;background:linear-gradient(#6d95d4,#4e75b4)"></div>
<svg class="i" style="left:1107px;top:162px" width="262" height="19" viewBox="0 0 262 19">
<path d="M22 0V19M44 0V19M66 0V19M88 0V19M110 0V19M132 0V19M154 0V19M176 0V19M198 0V19M220 0V19" stroke="#333"/>
<g transform="translate(3 2)"><rect x="1" y="4" width="14" height="10" fill="#7c7c7c" stroke="#333"/><circle cx="8" cy="9" r="3" fill="#4c4c4c"/><rect x="2" y="2" width="5" height="2" fill="#7c7c7c"/></g>
<g transform="translate(25 1)"><rect x="4" y="4" width="11" height="12" fill="#6a6a6a" stroke="#333"/><rect x="1" y="1" width="11" height="12" fill="#8c9aa6" stroke="#2a2a2a"/><rect x="5" y="4" width="3" height="6" fill="#4f78b0"/></g>
<g transform="translate(47 2)"><circle cx="4" cy="3" r="2.5" fill="#8f8d58"/><circle cx="6" cy="12" r="3.4" fill="#b8b8b8" stroke="#222"/><rect x="10" y="4" width="5" height="9" fill="#4e79b5"/></g>
<g transform="translate(69 2)"><circle cx="8" cy="8" r="6.5" fill="#4a7090" stroke="#333"/><path d="M5 3Q9 5 7 8Q3 10 4 13M10 8Q14 8 13 12" fill="none" stroke="#708858" stroke-width="2"/></g>
<g transform="translate(91 1)"><path d="M8 1L15 4.5V13L8 16.5L1 13V4.5Z" fill="#b98a55" stroke="#2a2a2a"/><path d="M8 3L13 5L8 7.5L3 5Z" fill="#c9a175"/></g>
<g transform="translate(113 2)" fill="none" stroke="#8e8e8e" stroke-width="1.8"><rect x="1" y="7" width="8" height="5" rx="2.5" transform="rotate(-40 5 9.5)"/><rect x="7" y="3" width="8" height="5" rx="2.5" transform="rotate(-40 11 5.5)"/></g>
<g transform="translate(135 2)"><path d="M3 14L10 6" stroke="#5c8ac0" stroke-width="3.2"/><path d="M9 7Q7 2 12 1L11 4L14 5L15 3Q15 8 10 8" fill="#8e8e8e"/></g>
<g transform="translate(157 1)"><path d="M2 3H14L8 15Z" fill="none" stroke="#8a8a8a" stroke-width="1"/><circle cx="2" cy="3" r="1.2" fill="#bbb"/><circle cx="14" cy="3" r="1.2" fill="#bbb"/><circle cx="8" cy="15" r="1.2" fill="#bbb"/></g>
<g transform="translate(179 2)"><circle cx="8" cy="8" r="6.5" fill="#6e6e6e"/><path d="M8 1.5A6.5 6.5 0 0 0 2 11L8 8Z" fill="#7e655c"/><path d="M8 8L14 11A6.5 6.5 0 0 1 3 12Z" fill="#3a3a3a"/></g>
<g transform="translate(201 2)"><rect x="2" y="2" width="12" height="12" fill="#a89a96" stroke="#3a3a3a"/><path d="M3 3h3v3h-3zM9 3h3v3h-3zM6 6h3v3h-3zM12 6h2v3h-2zM3 9h3v3h-3zM9 9h3v3h-3z" fill="#7a3030"/></g>
<g transform="translate(223 1)" fill="#bdb995"><path d="M5 2L5.8 5.2L9 6L5.8 6.8L5 10L4.2 6.8L1 6L4.2 5.2ZM12 2L12.8 5.2L16 6L12.8 6.8L12 10L11.2 6.8L8 6L11.2 5.2ZM5 9.5L5.8 12.7L9 13.5L5.8 14.3L5 17.5L4.2 14.3L1 13.5L4.2 12.7ZM12 10L12.7 12.8L15.5 13.5L12.7 14.2L12 17L11.3 14.2L8.5 13.5L11.3 12.8Z"/></g>
<g transform="translate(245 1)"><path d="M2 7L8 15L13 8" fill="none" stroke="#cfe2f9" stroke-width="2.2"/><path d="M7 13L11 4" stroke="#cfe2f9" stroke-width="1.4"/><circle cx="13" cy="4.5" r="3.5" fill="#fff" stroke="#335"/></g>
</svg>
<div style="left:1062px;top:184px;width:360px;height:1px;background:#5e5e5e;box-shadow:0 1px 0 #7f7f7f"></div>

<!-- context row -->
<svg class="i" style="left:1071px;top:189px" width="16" height="16"><path d="M2 15L7 9" stroke="#eee" stroke-width="1.6"/><path d="M7 5L12 10L9 10.5L5 6.5Z" fill="#f0f0f0" stroke="#222" stroke-width=".7"/><path d="M8 3L13 8L14 5.5L10.5 2Z" fill="#d0d0d0" stroke="#222" stroke-width=".7"/></svg>
<svg class="i" style="left:1093px;top:189px" width="16" height="16"><use href="#sc"/></svg>
<svg class="i" style="left:1115px;top:194px" width="6" height="8"><path d="M1 1L5 4L1 7Z" fill="#3e3e3e"/></svg>
<svg class="i" style="left:1134px;top:190px" width="15" height="15"><use href="#cube"/></svg>
<span class="t" style="left:1153px;top:191px">Cube_cell.094</span>
<div style="left:1066px;top:214px;width:354px;height:1px;background:#5a5a5a;box-shadow:0 1px 0 #7e7e7e"></div>

<!-- prop scrollbar -->
<div style="left:1424px;top:190px;width:13px;height:646px;background:#646464;border-radius:6px;box-sizing:border-box;border:1px solid #585858"></div>
<div style="left:1425px;top:197px;width:11px;height:638px;background:linear-gradient(90deg,#848484,#969696,#7c7c7c);border-radius:5px;box-sizing:border-box;border:1px solid #505050"></div>

<!-- Physics -->
<svg class="i" style="left:1073px;top:222px" width="10" height="10"><path d="M1 1H9L5 9Z" fill="#2f2f2f"/></svg>
<span class="t h" style="left:1086px;top:221px">Physics</span>
<svg class="i" style="left:1398px;top:217px" width="16" height="16"><use href="#ha"/></svg>
<span class="t" style="left:1076px;top:251px">Physics Type:</span>
<div class="d" style="left:1188px;top:248px;width:228px;height:19px"></div>
<span class="t w" style="left:1196px;top:251px">Rigid Body</span>
<svg class="i" style="left:1406px;top:251px" width="7" height="13"><use href="#ud"/></svg>

<div class="c" style="left:1072px;top:286px"></div>
<svg class="i" style="left:1073px;top:285px" width="14" height="14"><path d="M2 7L6 11L12 2" fill="none" stroke="#e8e8e8" stroke-width="2.2"/></svg>
<span class="t w" style="left:1094px;top:287px">Actor</span>
<div class="c" style="left:1249px;top:286px"></div><span class="t" style="left:1271px;top:287px">Use Material Force Field</span>
<div class="c" style="left:1072px;top:308px"></div><span class="t" style="left:1094px;top:309px">Ghost</span>
<div class="c" style="left:1249px;top:308px"></div><span class="t" style="left:1271px;top:309px">Rotate From Normal</span>
<div class="b" style="left:1069px;top:327px;width:169px;height:20px;border-radius:4px;background:linear-gradient(#a6a6a6,#8a8a8a)"></div>
<svg class="i" style="left:1074px;top:331px" width="13" height="13"><use href="#cam"/></svg>
<span class="t cn" style="left:1069px;top:331px;width:183px">Invisible</span>
<div class="c" style="left:1249px;top:330px"></div><span class="t" style="left:1271px;top:331px">No Sleeping</span>

<span class="t" style="left:1076px;top:367px">Attributes:</span>
<div class="c" style="left:1249px;top:366px"></div><span class="t" style="left:1271px;top:367px">Anisotropic Friction</span>
<div class="n" style="left:1069px;top:386px;width:169px;height:19px;border-radius:10px"></div>
<div class="n" style="left:1069px;top:408px;width:169px;height:19px;border-radius:10px"></div>
<div class="n" style="left:1069px;top:430px;width:169px;height:19px;border-radius:10px"></div>
<span class="t cn" style="left:1069px;top:389px;width:169px">Mass: 0.010</span>
<span class="t cn" style="left:1069px;top:411px;width:169px">Radius: 1.000</span>
<span class="t cn" style="left:1069px;top:433px;width:169px">Form Factor: 0.400</span>
<svg class="i" style="left:1076px;top:391px" width="7" height="8"><path d="M5 1L1 4L5 7Z" fill="#7c7c7c"/></svg><svg class="i" style="left:1226px;top:391px" width="7" height="8"><path d="M1 1L5 4L1 7Z" fill="#7c7c7c"/></svg>
<svg class="i" style="left:1076px;top:413px" width="7" height="8"><path d="M5 1L1 4L5 7Z" fill="#7c7c7c"/></svg><svg class="i" style="left:1226px;top:413px" width="7" height="8"><path d="M1 1L5 4L1 7Z" fill="#7c7c7c"/></svg>
<svg class="i" style="left:1076px;top:435px" width="7" height="8"><path d="M5 1L1 4L5 7Z" fill="#7c7c7c"/></svg><svg class="i" style="left:1226px;top:435px" width="7" height="8"><path d="M1 1L5 4L1 7Z" fill="#7c7c7c"/></svg>

<div style="left:1246px;top:385px;width:170px;height:21px;box-sizing:border-box;border:1px solid #4c4c4c;border-radius:9px 9px 0 0;background:linear-gradient(#6a6a6a,#7a7a7a)"></div>
<div style="left:1246px;top:405px;width:170px;height:21px;box-sizing:border-box;border:1px solid #4c4c4c;background:linear-gradient(#6a6a6a,#7a7a7a)"></div>
<div style="left:1246px;top:425px;width:170px;height:20px;box-sizing:border-box;border:1px solid #4c4c4c;border-radius:0 0 9px 9px;background:linear-gradient(#6a6a6a,#7a7a7a)"></div>
<span class="t cn g" style="left:1246px;top:389px;width:170px">1.000</span>
<span class="t cn g" style="left:1246px;top:409px;width:170px">1.000</span>
<span class="t cn g" style="left:1246px;top:429px;width:170px">1.000</span>

<span class="t" style="left:1076px;top:458px">Velocity:</span>
<span class="t" style="left:1254px;top:458px">Damping:</span>
<div class="n" style="left:1069px;top:477px;width:169px;height:20px;border-radius:10px 10px 0 0"></div>
<div class="n" style="left:1069px;top:496px;width:169px;height:20px;border-radius:0 0 10px 10px"></div>
<span class="t cn" style="left:1069px;top:480px;width:169px">Minimum: 0.000</span>
<span class="t cn" style="left:1069px;top:500px;width:169px">Maximum: 0.000</span>
<svg class="i" style="left:1076px;top:482px" width="7" height="8"><path d="M5 1L1 4L5 7Z" fill="#7c7c7c"/></svg><svg class="i" style="left:1226px;top:482px" width="7" height="8"><path d="M1 1L5 4L1 7Z" fill="#7c7c7c"/></svg>
<svg class="i" style="left:1076px;top:502px" width="7" height="8"><path d="M5 1L1 4L5 7Z" fill="#7c7c7c"/></svg><svg class="i" style="left:1226px;top:502px" width="7" height="8"><path d="M1 1L5 4L1 7Z" fill="#7c7c7c"/></svg>
<div class="n" style="left:1246px;top:477px;width:170px;height:20px;border-radius:10px 10px 0 0;background:linear-gradient(90deg,#656565 15px,transparent 15px),linear-gradient(#a6a6a6,#b8b8b8)"></div>
<div class="n" style="left:1246px;top:496px;width:170px;height:20px;border-radius:0 0 10px 10px;background:linear-gradient(90deg,#656565 25px,transparent 25px),linear-gradient(#a6a6a6,#b8b8b8)"></div>
<span class="t cn" style="left:1246px;top:480px;width:180px">Translation: 0.040</span>
<span class="t cn" style="left:1246px;top:500px;width:180px">Rotation: 0.100</span>

<span class="t" style="left:1076px;top:536px">Lock Translation:</span>
<span class="t" style="left:1254px;top:536px">Lock Rotation:</span>
<div class="c" style="left:1072px;top:557px"></div><span class="t" style="left:1094px;top:558px">X</span>
<div class="c" style="left:1072px;top:579px"></div><span class="t" style="left:1094px;top:580px">Y</span>
<div class="c" style="left:1072px;top:601px"></div><span class="t" style="left:1094px;top:602px">Z</span>
<div class="c" style="left:1249px;top:557px"></div><span class="t" style="left:1271px;top:558px">X</span>
<div class="c" style="left:1249px;top:579px"></div><span class="t" style="left:1271px;top:580px">Y</span>
<div class="c" style="left:1249px;top:601px"></div><span class="t" style="left:1271px;top:602px">Z</span>

<span class="t" style="left:1076px;top:638px">Collision Group:</span>
<span class="t" style="left:1254px;top:638px">Collision Mask:</span>
<svg class="i" style="left:1069px;top:656px" width="169" height="30"><rect x=".5" y=".5" width="168" height="29" rx="4" fill="#9c9c9c" stroke="#3a3a3a"/><path d="M1 14V4.5Q1 1 4 1H41V14Z" fill="#656565"/><path d="M41.5 .5V29.5M83.5 .5V29.5M125.5 .5V29.5M.5 14.5H168.5" stroke="#3a3a3a"/></svg>
<svg class="i" style="left:1246px;top:656px" width="170" height="30"><rect x=".5" y=".5" width="169" height="29" rx="4" fill="#636363" stroke="#3a3a3a"/><path d="M41.5 .5V29.5M84.5 .5V29.5M126.5 .5V29.5M.5 14.5H169.5" stroke="#3a3a3a"/></svg>
<div style="left:1066px;top:693px;width:354px;height:1px;background:#565656;box-shadow:0 1px 0 #7e7e7e"></div>

<svg class="i" style="left:1073px;top:701px" width="10" height="10"><path d="M1 1H9L5 9Z" fill="#2f2f2f"/></svg>
<div class="c" style="left:1086px;top:699px;background:linear-gradient(#555,#6a6a6a)"></div>
<svg class="i" style="left:1087px;top:698px" width="14" height="14"><path d="M2 7L6 11L12 2" fill="none" stroke="#e8e8e8" stroke-width="2.2"/></svg>
<span class="t h" style="left:1106px;top:699px">Collision Bounds</span>
<svg class="i" style="left:1398px;top:697px" width="16" height="16"><use href="#ha"/></svg>
<span class="t" style="left:1076px;top:730px">Bounds:</span>
<div class="d" style="left:1188px;top:727px;width:228px;height:19px"></div>
<span class="t w" style="left:1196px;top:730px">Convex Hull</span>
<svg class="i" style="left:1406px;top:730px" width="7" height="13"><use href="#ud"/></svg>
<div class="n" style="left:1069px;top:751px;width:169px;height:20px;border-radius:10px;background:linear-gradient(90deg,#656565 9px,transparent 9px),linear-gradient(#a8a8a8,#bcbcbc)"></div>
<span class="t cn" style="left:1069px;top:755px;width:169px">Margin: 0.000</span>
<div class="c" style="left:1249px;top:754px"></div><span class="t" style="left:1271px;top:755px">Compound</span>
<div style="left:1066px;top:778px;width:354px;height:1px;background:#565656;box-shadow:0 1px 0 #7e7e7e"></div>
<svg class="i" style="left:1073px;top:786px" width="10" height="10"><path d="M1 1H9L5 9Z" fill="#2f2f2f"/></svg>
<div class="c" style="left:1086px;top:784px"></div>
<span class="t h" style="left:1106px;top:784px">Create Obstacle</span>
<svg class="i" style="left:1398px;top:782px" width="16" height="16"><use href="#ha"/></svg>
<div style="left:1069px;top:812px;width:169px;height:19px;box-sizing:border-box;border:1px solid #4f4f4f;border-radius:10px;background:linear-gradient(#707070,#7c7c7c)"></div>
<span class="t cn g" style="left:1069px;top:815px;width:169px">Radius: 1.000</span>
<svg class="i" style="left:1076px;top:817px" width="7" height="8"><path d="M5 1L1 4L5 7Z" fill="#656565"/></svg><svg class="i" style="left:1226px;top:817px" width="7" height="8"><path d="M1 1L5 4L1 7Z" fill="#656565"/></svg>
<svg class="i" style="left:1062px;top:827px" width="12" height="12"><use href="#ha"/></svg>
<div style="left:1062px;top:839px;width:378px;height:1px;background:#3d4d60"></div>
<div style="left:0;top:839px;width:1062px;height:1px;background:#3d4d60"></div>

<!-- Annotation overlay -->
<svg style="position:absolute;left:0;top:0" width="1440" height="840" viewBox="0 0 1440 840">
<g fill="none" stroke="#d4d4d4">
<ellipse cx="741" cy="136" rx="80" ry="41" stroke-width="3.6"/>
<path d="M680 164L651 193" stroke-width="5"/>
<ellipse cx="461" cy="543" rx="180" ry="67" stroke="#e2e2e2" stroke-width="4"/>
<path d="M614 582L1031 746" stroke-width="5"/>
<ellipse cx="889" cy="589" rx="111" ry="41" stroke="#e2e2e2" stroke-width="4"/>
<path d="M982 612L1060 735" stroke-width="5"/>
</g>
<ellipse cx="729.5" cy="17" rx="62" ry="14.5" fill="none" stroke="#f40000" stroke-width="4"/>
<ellipse cx="1152" cy="762" rx="102" ry="41" fill="none" stroke="#f40000" stroke-width="4"/>
<g font-family="'Liberation Serif',serif" font-size="24" fill="#fff" text-anchor="middle">
<text x="742.5" y="143">Solo un trozo</text>
<text x="455" y="527">Selecionando todos los trozos,</text>
<text x="458" y="555">no les cambia el valor a todos</text>
<text x="460" y="584">solo a uno</text>
<text x="888" y="578">Tan solo afecta al</text>
<text x="890.5" y="605">trozo selecionado</text>
</g>
</svg>
</div></body></html>
